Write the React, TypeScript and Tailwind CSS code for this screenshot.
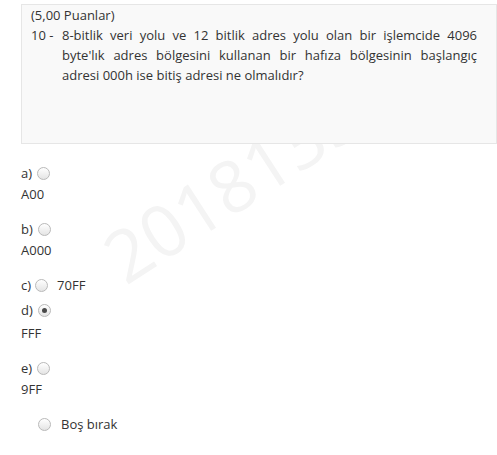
import React from "react";

const Radio = ({checked = false}: { checked?: boolean }) => (
    <span
        className="inline-flex items-center justify-center w-[13px] h-[13px] rounded-full border border-[#b9b9b9] bg-gradient-to-b from-white to-[#e4e4e4] align-middle">
        {checked && <span className="w-[5px] h-[5px] rounded-full bg-[#4a4a4a]"/>}
    </span>
);

export default function App() {
    return (
        <div className="relative w-[497px] h-[455px] overflow-hidden bg-white text-[13px] text-[#333] font-['Open_Sans',sans-serif]">
            {/* watermark */}
            <div
                className="absolute left-[130px] top-[221px] text-[72px] leading-none text-[#f4f4f4] origin-bottom-left -rotate-[33deg] whitespace-nowrap select-none">
                2018135
            </div>

            {/* question box */}
            <div className="relative ml-[21px] mt-[4px] h-[140px] border border-[#e6e6e6] bg-[#f9f9f9] pl-[9px] pr-[19px] leading-[20px]">
                <div>(5,00 Puanlar)</div>
                <div className="flex">
                    <span className="w-[31px] shrink-0">10 -</span>
                    <p className="text-justify">
                        8-bitlik veri yolu ve 12 bitlik adres yolu olan bir işlemcide 4096 byte'lık adres bölgesini
                        kullanan bir hafıza bölgesinin başlangıç adresi 000h ise bitiş adresi ne olmalıdır?
                    </p>
                </div>
            </div>

            {/* options */}
            <div className="relative pl-[21px] mt-[19px] leading-[21px]">
                <div>
                    <div className="flex items-center gap-[5px]">a) <Radio/></div>
                    <div>A00</div>
                </div>
                <div className="mt-[14px]">
                    <div className="flex items-center gap-[5px]">b) <Radio/></div>
                    <div>A000</div>
                </div>
                <div className="mt-[14px] flex items-center">
                    <span className="mr-[4px]">c)</span> <Radio/> <span className="ml-[9px]">70FF</span>
                </div>
                <div className="mt-[4px]">
                    <div className="flex items-center gap-[5px]">d) <Radio checked/></div>
                    <div className="mt-[2px]">FFF</div>
                </div>
                <div className="mt-[14px]">
                    <div className="flex items-center gap-[5px]">e) <Radio/></div>
                    <div>9FF</div>
                </div>
                <div className="mt-[14px] ml-[17px] flex items-center gap-[10px]">
                    <Radio/> <span>Boş bırak</span>
                </div>
            </div>
        </div>
    );
}
